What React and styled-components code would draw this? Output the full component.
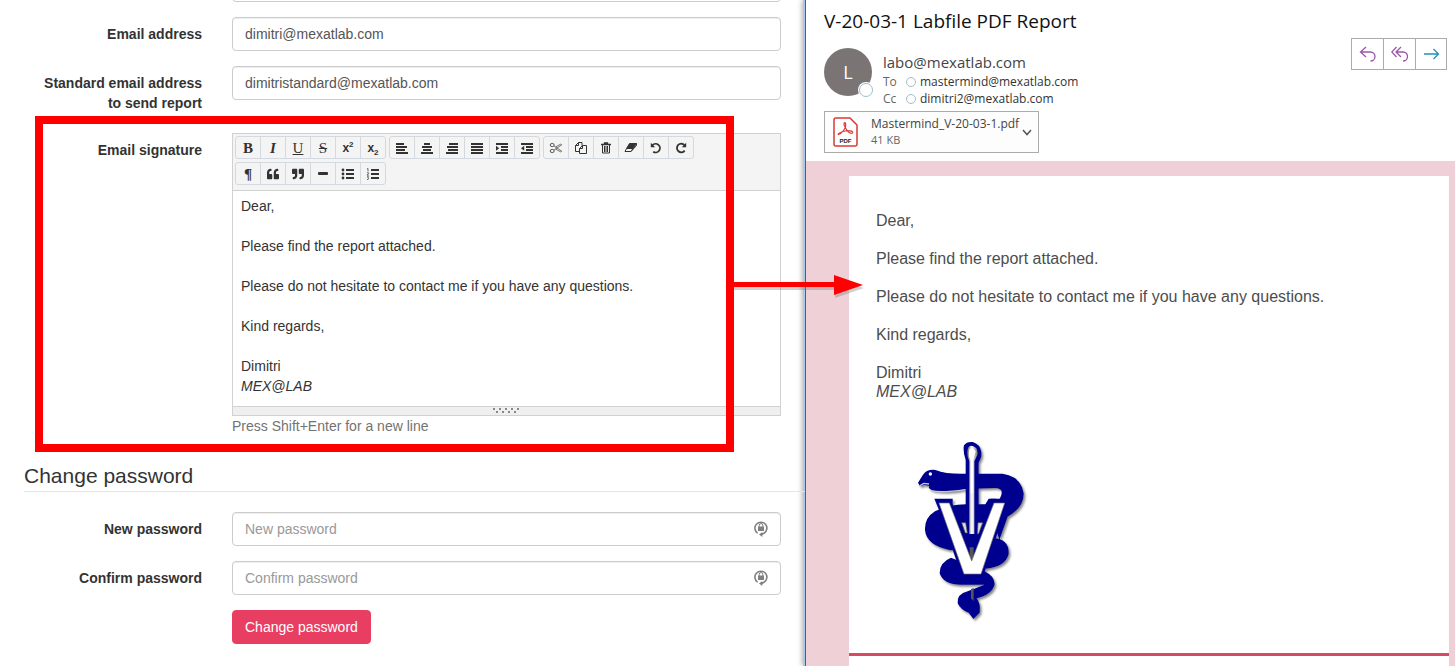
import React from "react"
import styled, { createGlobalStyle } from "styled-components"
import { FaQuoteLeft, FaQuoteRight } from "react-icons/fa"

const colors = {
  text: "#333",
  muted: "#737373",
  border: "#ccc",
  editorBorder: "#d3d9de",
  toolbar: "#f4f4f4",
  primary: "#e83e62",
  pink: "#f0d0d7",
  mark: "#fe0000",
}
const fonts = {
  form: `"Liberation Sans", Arial, sans-serif`,
  mail: `"Open Sans", "Noto Sans", sans-serif`,
}

const GlobalStyle = createGlobalStyle`
  * {
    box-sizing: border-box;
  }
  body {
    margin: 0;
    background: #fff;
    color: ${colors.text};
    font-family: ${fonts.form};
    font-size: 14px;
    line-height: 20px;
  }
  button, input {
    font: inherit;
  }
  p {
    margin: 0;
  }
`

const Page = styled.div`
  display: grid;
  grid-template-columns: minmax(0, 1fr) 650px;
  min-height: 100vh;
  overflow: hidden;
`
const Settings = styled.main`
  position: relative;
  z-index: 1;
  padding-left: 24px;
`
const Form = styled.form`
  display: flex;
  flex-direction: column;
  gap: 15px;
  padding-right: 24px;
`
const ProfileForm = styled(Form)`
  margin-top: -32px;
`
const Row = styled.div`
  position: relative;
  display: grid;
  grid-template-columns: 178px minmax(0, 1fr);
  column-gap: 30px;
`
const Label = styled.label`
  padding: 7px 0 5px 15px;
  font-weight: bold;
  text-align: right;
`
const InputWrap = styled.div`
  position: relative;
  grid-column: 2;
  min-width: 0;
`
const Input = styled.input`
  display: block;
  width: 100%;
  height: 34px;
  padding: 6px 12px;
  border: 1px solid ${colors.border};
  border-radius: 4px;
  background: #fff;
  color: #555;
  box-shadow: inset 0 1px 1px rgba(0, 0, 0, 0.07);
  &::placeholder {
    color: #999;
    opacity: 1;
  }
`
const LockIcon = styled.svg`
  position: absolute;
  top: 8px;
  right: 12px;
`
const Legend = styled.h2`
  margin: 25px 0 20px;
  border-bottom: 1px solid #e5e5e5;
  font-size: 21px;
  font-weight: normal;
  line-height: 30px;
`
const Submit = styled.button`
  grid-column: 2;
  justify-self: start;
  height: 34px;
  padding: 0 12px;
  border: 1px solid ${colors.primary};
  border-radius: 4px;
  background: ${colors.primary};
  color: #fff;
`

const Editor = styled.div`
  border: 1px solid #d1d1d1;
`
const Toolbar = styled.div`
  display: flex;
  flex-wrap: wrap;
  gap: 3px;
  padding: 2px 2px 5px;
  border-bottom: 1px solid #d1d1d1;
  background: ${colors.toolbar};
`
const ToolGroup = styled.div`
  display: flex;
  border: 1px solid ${colors.editorBorder};
  border-radius: 3px;
`
const Tool = styled.button`
  display: flex;
  align-items: center;
  justify-content: center;
  width: 25px;
  height: 21px;
  padding: 0;
  border: 0;
  border-right: 1px solid ${colors.editorBorder};
  background: none;
  color: ${colors.text};
  &:last-child {
    width: 24px;
    border-right: 0;
  }
`
const Glyph = styled.span`
  font-family: "Liberation Serif", serif;
  font-size: 15px;
  line-height: 20px;
  font-weight: ${(p) => (p.$bold ? "bold" : "normal")};
  font-style: ${(p) => (p.$italic ? "italic" : "normal")};
  text-decoration: ${(p) => p.$line || "none"};
`
const Script = styled.span`
  font-size: 12px;
  font-weight: bold;
  line-height: 12px;
  sup,
  sub {
    font-size: 8px;
    line-height: 0;
  }
`
const EditorBody = styled.div`
  padding: 5px 8px 10px;
  outline: 0;
  p + p {
    margin-top: 20px;
  }
`
const Resizer = styled.div`
  display: flex;
  justify-content: center;
  height: 9px;
  border-top: 1px solid #d1d1d1;
  background: #efefef;
`
const Help = styled.p`
  color: ${colors.muted};
`

const Highlight = styled.div`
  position: absolute;
  inset: -17px 47px -16px 11px;
  border: 8px solid ${colors.mark};
  pointer-events: none;
`
const Arrow = styled.svg`
  position: absolute;
  top: 138px;
  right: -84px;
  pointer-events: none;
`

const Mail = styled.section`
  display: flex;
  flex-direction: column;
  border-left: 1px solid #3a62a0;
  background: #fff;
  box-shadow: -2px 0 0 #a9c8ea, -3px 0 5px rgba(0, 0, 0, 0.3);
  font-family: ${fonts.mail};
`
const MailHeader = styled.header`
  display: flex;
  justify-content: space-between;
  align-items: flex-start;
  height: 161px;
  padding: 8px 8px 8px 18px;
`
const Subject = styled.h1`
  margin: 0 0 14px;
  color: #111;
  font-size: 19px;
  font-weight: normal;
  line-height: 26px;
`
const Sender = styled.div`
  display: flex;
  gap: 11px;
`
const Avatar = styled.div`
  position: relative;
  width: 48px;
  height: 48px;
  border-radius: 50%;
  background: #7a7574;
  color: #fff;
  font-size: 18px;
  line-height: 48px;
  text-align: center;
`
const Presence = styled.span`
  width: 10px;
  height: 10px;
  border: 1px solid #a3bcc9;
  border-radius: 50%;
  background: #fff;
`
const AvatarPresence = styled(Presence)`
  position: absolute;
  right: -1px;
  bottom: -1px;
  width: 14px;
  height: 14px;
  box-shadow: 0 0 0 1px #fff;
`
const From = styled.div`
  padding-top: 4px;
  color: #444;
  font-size: 15px;
  line-height: 21px;
`
const Recipient = styled.div`
  display: flex;
  align-items: center;
  gap: 4px;
  color: #333;
  font-size: 12px;
  line-height: 17px;
`
const Kind = styled.span`
  width: 19px;
  color: #666;
`
const Attachment = styled.button`
  display: flex;
  align-items: center;
  gap: 3px;
  height: 42px;
  margin-top: 4px;
  padding: 0 6px 0 8px;
  border: 1px solid #ababab;
  background: #fdfdfd;
  color: #444;
  font-size: 12px;
  line-height: 16px;
  text-align: left;
`
const FileName = styled.div`
  padding-left: 10px;
`
const FileSize = styled.div`
  color: #666;
  font-size: 11px;
`
const Actions = styled.div`
  display: flex;
  margin-top: 30px;
  border: 1px solid #ababab;
`
const Action = styled.button`
  display: flex;
  align-items: center;
  justify-content: center;
  width: 32px;
  height: 30px;
  padding: 0;
  border: 0;
  background: #fff;
  color: ${(p) => p.$color};
  & + & {
    border-left: 1px solid #ababab;
  }
  &:first-child,
  &:last-child {
    width: 31px;
  }
`
const MailBackground = styled.div`
  flex: 1;
  padding: 15px 6px 0 43px;
  background: ${colors.pink};
`
const Message = styled.article`
  height: 100%;
  padding: 35px 27px 0;
  background: #fff;
  color: #4d4d4d;
  font-family: ${fonts.form};
  font-size: 16px;
  line-height: 19px;
  p {
    margin-bottom: 19px;
  }
`
const Logo = styled.svg`
  display: block;
  margin: 39px 0 23px 40px;
`
const Rule = styled.hr`
  height: 3px;
  margin: 0 -27px;
  border: 0;
  background: #d64a62;
`

const Lines = ({ rows, children }) => (
  <svg width="14" height="12" viewBox="0 0 14 12" fill="currentColor">
    {rows.map(([x, w], i) => (
      <rect key={i} x={x} y={1 + i * 3} width={w} height="2" />
    ))}
    {children}
  </svg>
)

const icons = {
  left: <Lines rows={[[1, 8], [1, 11], [1, 9], [1, 12]]} />,
  center: <Lines rows={[[4, 6], [2, 10], [3, 8], [1, 12]]} />,
  right: <Lines rows={[[4, 9], [2, 11], [3, 10], [1, 12]]} />,
  justify: <Lines rows={[[1, 12], [1, 12], [1, 12], [1, 12]]} />,
  indent: (
    <Lines rows={[[1, 12], [6, 7], [6, 7], [1, 12]]}>
      <path d="M1 3.8L4.2 6.2L1 8.8Z" />
    </Lines>
  ),
  outdent: (
    <Lines rows={[[1, 12], [6, 7], [6, 7], [1, 12]]}>
      <path d="M4.2 3.8L1 6.2L4.2 8.8Z" />
    </Lines>
  ),
  cut: (
    <svg width="14" height="12" viewBox="0 0 14 12" fill="none" stroke="#555">
      <ellipse cx="3.2" cy="3" rx="2" ry="1.6" />
      <ellipse cx="3.2" cy="9" rx="2" ry="1.6" />
      <path d="M5 4L12.8 9.2L11.5 9.8L6.5 7M5 8L12.8 2.8L11.5 2.2L6.5 5" strokeWidth=".8" />
    </svg>
  ),
  copy: (
    <svg width="14" height="14" viewBox="0 0 14 14" fill="none" stroke="currentColor">
      <path d="M5.5 10.5h-4v-6l3-3h3.5v3M4.5 1.5v3h-3" />
      <path d="M5.5 7.5l3-3h4v8h-7zM8.5 4.5v3h-3" />
    </svg>
  ),
  trash: (
    <svg width="10" height="12" viewBox="0 0 10 12" fill="none" stroke="currentColor">
      <path d="M3.5 2V1h3v1M0 2.5h10" strokeWidth="1.3" />
      <path d="M1.5 3v8h7V3M3.5 4v6M5 4v6M6.5 4v6" />
    </svg>
  ),
  eraser: (
    <svg width="14" height="12" viewBox="0 0 14 12" fill="none" stroke="currentColor">
      <path d="M5.5 1.5H12.5L9 6.5H2.5Z" fill="currentColor" />
      <path d="M2.5 6.5L1 9.5H7L9 6.5M7 9.5L12.5 3.5V1.5" />
    </svg>
  ),
  undo: (
    <svg width="12" height="12" viewBox="0 0 12 12">
      <path d="M2.5 3.2A4.3 4.3 0 1 1 3.2 9.7" fill="none" stroke="currentColor" strokeWidth="1.8" />
      <path d="M.8.8V5.2H5.2Z" fill="currentColor" />
    </svg>
  ),
  redo: (
    <svg width="12" height="12" viewBox="0 0 12 12">
      <path d="M9.5 3.2A4.3 4.3 0 1 0 9.7 8.6" fill="none" stroke="currentColor" strokeWidth="1.8" />
      <path d="M11.2.8V5.2H6.8Z" fill="currentColor" />
    </svg>
  ),
  rule: (
    <svg width="10" height="3" fill="currentColor">
      <rect width="10" height="3" rx="1" />
    </svg>
  ),
  bullets: (
    <Lines rows={[]}>
      <path d="M5 1h8v2H5zM5 5h8v2H5zM5 9h8v2H5z" />
      <circle cx="2" cy="2" r="1.4" />
      <circle cx="2" cy="6" r="1.4" />
      <circle cx="2" cy="10" r="1.4" />
    </Lines>
  ),
  numbers: (
    <Lines rows={[]}>
      <path d="M5 1h8v2H5zM5 5h8v2H5zM5 9h8v2H5z" />
      <path
        d="M1 1l1-.5v3M1 4.8h1.5v.9L1 7.2h1.8M1 8.7h1.6L1.8 9.8q1 0 .8 1t-1.6.6"
        fill="none"
        stroke="currentColor"
        strokeWidth=".7"
      />
    </Lines>
  ),
}

const toolGroups = [
  [
    ["Bold", <Glyph $bold>B</Glyph>],
    ["Italic", <Glyph $bold $italic>I</Glyph>],
    ["Underline", <Glyph $line="underline">U</Glyph>],
    ["Strikethrough", <Glyph $line="line-through">S</Glyph>],
    ["Superscript", <Script>x<sup>2</sup></Script>],
    ["Subscript", <Script>x<sub>2</sub></Script>],
  ],
  [
    ["Align left", icons.left],
    ["Center", icons.center],
    ["Align right", icons.right],
    ["Justify", icons.justify],
    ["Increase indent", icons.indent],
    ["Decrease indent", icons.outdent],
  ],
  [
    ["Cut", icons.cut],
    ["Copy", icons.copy],
    ["Delete", icons.trash],
    ["Remove format", icons.eraser],
    ["Undo", icons.undo],
    ["Redo", icons.redo],
  ],
  [
    ["Paragraph", <Glyph $bold>¶</Glyph>],
    ["Open quote", <FaQuoteLeft size={12} />],
    ["Close quote", <FaQuoteRight size={12} />],
    ["Horizontal line", icons.rule],
    ["Bulleted list", icons.bullets],
    ["Numbered list", icons.numbers],
  ],
]

const Field = ({ id, label, type = "text", lock, ...rest }) => (
  <Row>
    {label && <Label htmlFor={id}>{label}</Label>}
    <InputWrap>
      <Input id={id} type={type} {...rest} />
      {lock && (
        <LockIcon width="16" height="18" viewBox="0 0 16 18" fill="none" stroke="#808080">
          <path d="M4.6 13.2A6 6 0 1 1 11 13.3L8 14.8" strokeWidth="1.6" />
          <path d="M9.3 12L6 14.6L9.3 17Z" fill="#808080" stroke="none" />
          <rect x="5" y="6.5" width="6" height="4.5" fill="#808080" stroke="none" />
          <path d="M6.2 7V5.3a1.8 1.8 0 0 1 3.6 0V7" />
        </LockIcon>
      )}
    </InputWrap>
  </Row>
)

const SignatureText = () => (
  <>
    <p>Dear,</p>
    <p>Please find the report attached.</p>
    <p>Please do not hesitate to contact me if you have any questions.</p>
    <p>Kind regards,</p>
    <p>
      Dimitri
      <br />
      <em>MEX@LAB</em>
    </p>
  </>
)

const SignatureEditor = () => (
  <Row>
    <Label as="div" id="signature-label">
      Email signature
    </Label>
    <div>
      <Editor>
        <Toolbar role="toolbar" aria-label="Formatting">
          {toolGroups.map((group, i) => (
            <ToolGroup key={i}>
              {group.map(([name, icon]) => (
                <Tool key={name} type="button" aria-label={name}>
                  {icon}
                </Tool>
              ))}
            </ToolGroup>
          ))}
        </Toolbar>
        <EditorBody
          role="textbox"
          aria-multiline="true"
          aria-labelledby="signature-label"
          contentEditable
          suppressContentEditableWarning
          spellCheck={false}
        >
          <SignatureText />
        </EditorBody>
        <Resizer>
          <svg width="28" height="8" fill="#888">
            {[0, 1, 2, 3, 4, 5, 6, 7, 8].map((n) => (
              <rect key={n} x={n * 3} y={n % 2 ? 4 : 1} width="2" height="2" />
            ))}
          </svg>
        </Resizer>
      </Editor>
      <Help>Press Shift+Enter for a new line</Help>
    </div>
    <Highlight />
    <Arrow width="131" height="32" viewBox="0 0 131 32">
      <g fill="#777" opacity=".35">
        <path d="M0 14H101V6L130 17L101 27V19H0Z" />
      </g>
      <path d="M0 11H100V4L129 14L100 24V16H0Z" fill={colors.mark} />
    </Arrow>
  </Row>
)

const VetLogo = () => (
  <Logo width="112" height="190" viewBox="50 30 336 570" role="img" aria-label="Veterinary emblem">
    <defs>
      <filter id="shade" x="-10%" y="-10%" width="125%" height="125%">
        <feDropShadow dx="5" dy="6" stdDeviation="3" floodColor="#444" floodOpacity=".65" />
      </filter>
      <linearGradient id="staff">
        <stop offset="0" stopColor="#666" />
        <stop offset=".45" stopColor="#fff" />
        <stop offset="1" stopColor="#777" />
      </linearGradient>
    </defs>
    <g filter="url(#shade)" fill="#00008f">
      <path d="M199 340V90Q190 62 194 46Q202 34 220 36Q242 42 246 66V80L238 98V340Z" />
      <path d="M56 158L70 136Q82 117 108 120Q145 134 205 131L310 131Q365 139 373 190Q374 232 325 260L300 330L276 250L302 205Q318 174 286 174L205 177Q150 190 103 182Q84 176 90 168L74 164L62 169Z" />
      <path d="M205 223Q150 222 107 244Q75 264 77 300Q81 345 150 360L185 361L217 400L290 300V206H268L258 223Z" />
      <path d="M292 325Q330 333 328 372Q318 411 260 416L225 350Z" />
      <path d="M155 383Q120 397 121 430Q132 463 180 464L255 464Q230 474 205 484Q172 492 175 520Q184 540 208 548L222 567L241 548Q245 522 232 505Q280 493 286 462Q285 438 258 425Z" />
      <path d="M105 206H160V222L218 372L274 222V206H329L252 438H187L119 240Z" />
    </g>
    <path d="M187 278H199L204 309H198ZM236 278H250L238 311H234Z" fill="#ddd" stroke="#555" strokeWidth="2" />
    <path d="M211 352H223V384L217 390L211 380Z" fill="#555" />
    <path d="M215 477V505L223 513V474Z" fill="#555" />
    <path d="M205 80Q201 60 208 51Q218 42 231 55Q237 65 234 75L225 94V312H210V94Z" fill="url(#staff)" />
    <path d="M209 80Q207 60 212 56Q221 51 229 64L221 92V190H214V92Z" fill="#fff" />
    <path d="M119 219H150L217 393L284 219H316L245 432H194Z" fill="#fff" stroke="#777" strokeWidth="2" />
    <circle cx="93" cy="132" r="5" fill="#fff" />
    <path d="M60 168L73 160L89 162M95 183Q130 189 198 179" fill="none" stroke="#c6c6cf" strokeWidth="4" />
  </Logo>
)

const actions = [
  ["Reply", "#9b57a8", <path d="M7 1L1.5 6L7 11M2 6H11.5A4.5 4.5 0 0 1 11.5 15" />],
  ["Reply all", "#9b57a8", <path d="M5.5 1L.8 6L5.5 11M10 1L5 6L10 11M5 6H12A4.5 4.5 0 0 1 12 15" />],
  ["Forward", "#2490b8", <path d="M1 8H15.5M10.5 3L15.5 8L10.5 13" />],
]

const MailPreview = () => (
  <Mail>
    <MailHeader>
      <div>
        <Subject>V-20-03-1 Labfile PDF Report</Subject>
        <Sender>
          <Avatar>
            L<AvatarPresence />
          </Avatar>
          <div>
            <From>labo@mexatlab.com</From>
            <Recipient>
              <Kind>To</Kind>
              <Presence />
              mastermind@mexatlab.com
            </Recipient>
            <Recipient>
              <Kind>Cc</Kind>
              <Presence />
              dimitri2@mexatlab.com
            </Recipient>
          </div>
        </Sender>
        <Attachment type="button">
          <svg width="25" height="30" viewBox="0 0 25 30" fill="none" stroke="#d93a35">
            <path d="M3 1H17L24 8V27Q24 29 22 29H3Q1 29 1 27V3Q1 1 3 1Z" fill="#fff" strokeWidth="1.5" />
            <path d="M5.5 17.5C8 17 14 11 12.5 6.5C11.5 4 10 7 12 10C14 14 17 17 19.5 16C21 14 15 13 10 14.5C6 15.5 4.5 18 5.5 17.5Z" strokeWidth="1.2" />
            <text x="12.5" y="25.5" textAnchor="middle" fontSize="6" fontWeight="bold" fontFamily="Liberation Sans" fill="#222" stroke="none">
              PDF
            </text>
          </svg>
          <FileName>
            Mastermind_V-20-03-1.pdf
            <FileSize>41 KB</FileSize>
          </FileName>
          <svg width="10" height="7" viewBox="0 0 10 7" fill="none" stroke="#555" strokeWidth="1.5">
            <path d="M1 1L5 5.5L9 1" />
          </svg>
        </Attachment>
      </div>
      <Actions>
        {actions.map(([name, color, path]) => (
          <Action key={name} type="button" aria-label={name} $color={color}>
            <svg width="17" height="16" viewBox="0 0 17 16" fill="none" stroke="currentColor" strokeWidth="1.3">
              {path}
            </svg>
          </Action>
        ))}
      </Actions>
    </MailHeader>
    <MailBackground>
      <Message>
        <SignatureText />
        <VetLogo />
        <Rule />
      </Message>
    </MailBackground>
  </Mail>
)

const App = () => (
  <>
    <GlobalStyle />
    <Page>
      <Settings>
        <ProfileForm>
          <Field id="name" aria-label="Name" />
          <Field id="email" label="Email address" type="email" defaultValue="dimitri@mexatlab.com" />
          <Field
            id="standard-email"
            label="Standard email address to send report"
            type="email"
            defaultValue="dimitristandard@mexatlab.com"
          />
          <SignatureEditor />
        </ProfileForm>
        <Legend>Change password</Legend>
        <Form>
          <Field id="new-password" label="New password" type="password" placeholder="New password" lock />
          <Field id="confirm-password" label="Confirm password" type="password" placeholder="Confirm password" lock />
          <Row>
            <Submit type="button">Change password</Submit>
          </Row>
        </Form>
      </Settings>
      <MailPreview />
    </Page>
  </>
)

export default App
